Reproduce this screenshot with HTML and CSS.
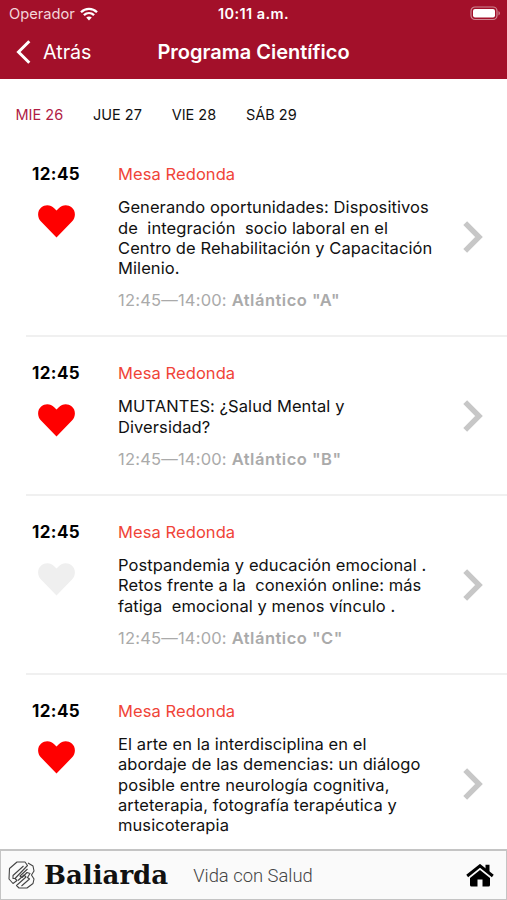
FILE: index.html
```html
<!DOCTYPE html>
<html lang="es">
<head>
  <meta charset="UTF-8" />
  <meta name="viewport" content="width=device-width, initial-scale=1" />
  <title>Programa Científico</title>
  <link rel="stylesheet" href="styles.css">
</head>
<body>

  <!-- Iconos reutilizables -->
  <svg class="iconos" width="0" height="0">
    <symbol id="corazon" viewBox="0 0 37 33">
      <path d="M18.5 32.4 L3 16.6 C-1 12.4 -.8 6 3.2 2.6 C7.2 -.9 12.8 -.2 16.2 3.2 L18.5 5.6 L20.8 3.2 C24.2 -.2 29.8 -.9 33.8 2.6 C37.8 6 38 12.4 34 16.6 Z" fill="currentColor"/>
    </symbol>
    <symbol id="flecha" viewBox="0 0 20 32">
      <path d="M2.2 2.2 L16 16 L2.2 29.8" fill="none" stroke="currentColor" stroke-width="5.4"/>
    </symbol>
  </svg>

  <header>
    <div class="estado">
      <span class="operador">Operador
        <svg width="18" height="14" viewBox="0 0 18 14" fill="none" stroke="#fff" stroke-width="2.3">
          <path d="M1 5.2 C5.5 .7 12.5 .7 17 5.2"/>
          <path d="M3.9 8.2 C6.9 5.3 11.1 5.3 14.1 8.2"/>
          <path d="M6.2 10.5 C7.8 9 10.2 9 11.8 10.5 L9 13.4 Z" fill="#fff" stroke="none"/>
        </svg>
      </span>
      <span class="reloj">10:11 a.m.</span>
      <svg class="bateria" width="31" height="15" viewBox="0 0 31 15">
        <rect x="1" y="1" width="26" height="12.5" rx="4" fill="none" stroke="#cf8793" stroke-width="1.2"/>
        <rect x="3" y="3" width="22" height="8.5" rx="2" fill="#fff"/>
        <path d="M28.5 5 C30.4 5.8 30.4 8.7 28.5 9.5 Z" fill="#cf8793"/>
      </svg>
    </div>
    <div class="barra">
      <a class="atras">
        <svg width="15" height="24" viewBox="0 0 15 24" fill="none" stroke="#fff" stroke-width="3">
          <path d="M13.3 1.3 L2.5 12 L13.3 22.7"/>
        </svg>
        <span>Atrás</span>
      </a>
      <h1>Programa Científico</h1>
    </div>
  </header>

  <nav>
    <a class="activo">MIE 26</a>
    <a>JUE 27</a>
    <a>VIE 28</a>
    <a>SÁB 29</a>
  </nav>

  <main>
    <article>
      <div class="hora">
        <strong>12:45</strong>
        <svg class="favorito"><use href="#corazon"/></svg>
      </div>
      <div class="detalle">
        <h2>Mesa Redonda</h2>
        <p class="titulo">Generando oportunidades: Dispositivos<br>de &nbsp;integración &nbsp;socio laboral en el<br>Centro de Rehabilitación y Capacitación<br>Milenio.</p>
        <p class="lugar">12:45—14:00: <b>Atlántico "A"</b></p>
      </div>
      <svg class="ver"><use href="#flecha"/></svg>
    </article>

    <article>
      <div class="hora">
        <strong>12:45</strong>
        <svg class="favorito"><use href="#corazon"/></svg>
      </div>
      <div class="detalle">
        <h2>Mesa Redonda</h2>
        <p class="titulo">MUTANTES: ¿Salud Mental y<br>Diversidad?</p>
        <p class="lugar">12:45—14:00: <b>Atlántico "B"</b></p>
      </div>
      <svg class="ver"><use href="#flecha"/></svg>
    </article>

    <article>
      <div class="hora">
        <strong>12:45</strong>
        <svg class="favorito inactivo"><use href="#corazon"/></svg>
      </div>
      <div class="detalle">
        <h2>Mesa Redonda</h2>
        <p class="titulo">Postpandemia y educación emocional .<br>Retos frente a la &nbsp;conexión online: más<br>fatiga &nbsp;emocional y menos vínculo .</p>
        <p class="lugar">12:45—14:00: <b>Atlántico "C"</b></p>
      </div>
      <svg class="ver"><use href="#flecha"/></svg>
    </article>

    <article>
      <div class="hora">
        <strong>12:45</strong>
        <svg class="favorito"><use href="#corazon"/></svg>
      </div>
      <div class="detalle sin-lugar">
        <h2>Mesa Redonda</h2>
        <p class="titulo">El arte en la interdisciplina en el<br>abordaje de las demencias: un diálogo<br>posible entre neurología cognitiva,<br>arteterapia, fotografía terapéutica y<br>musicoterapia</p>
      </div>
      <svg class="ver"><use href="#flecha"/></svg>
    </article>
  </main>

  <footer>
    <svg class="logo" width="27" height="28" viewBox="0 0 27 28" fill="none" stroke="#444" stroke-width="1.1" stroke-linejoin="round">
      <path d="M17 1 L9 1 L1.5 7.5 L1 18 L5 22.5 L9 19.5 L7 17.5 L19.5 4.5 L17 1 Z"/>
      <path d="M15.5 5 L5 14.5 L5 17.5 L7 17.5"/>
      <path d="M20 2 L25 5 L26 10 L23.5 14 L26 18 L25 22.5 L19 27 L11 27 L8.5 24.5 L18 16 L16 14 L10 19.5"/>
      <path d="M19.5 8 L12 15 L14 16.5 L19 11.5 L22 12.5 L19.5 16.5 L21.5 18 L13.5 25"/>
    </svg>
    <span class="marca">Baliarda</span>
    <span class="lema">Vida con Salud</span>
    <svg class="inicio" width="28" height="23" viewBox="0 0 28 23">
      <path d="M1.2 12 L14 1.8 L26.8 12" fill="none" stroke="#000" stroke-width="3"/>
      <path d="M19.5 .8 H23.5 V9 L19.5 6 Z"/>
      <path d="M14 6 L24 14 V21 Q24 22.5 22.5 22.5 H16.5 V15.5 H11.5 V22.5 H5.5 Q4 22.5 4 21 V14 Z"/>
    </svg>
  </footer>

</body>
</html>
```
FILE: styles.css
```css
* {
  box-sizing: border-box;
}

body {
  display: flex;
  flex-direction: column;
  height: 900px;
  margin: 0;
  overflow: hidden;
  background-color: #fff;
  color: #111;
  font-family: Inter, "Liberation Sans", sans-serif;
}

h1, h2, p {
  margin: 0;
}

.iconos {
  position: absolute;
}

header {
  flex: none;
  height: 79px;
  background-color: #a3102a;
  color: #fff;
}

.estado {
  display: grid;
  grid-template-columns: 1fr auto 1fr;
  align-items: center;
  height: 27px;
  padding: 0 6px 0 9px;
  font-size: 14.7px;
}

.operador {
  display: flex;
  align-items: center;
  gap: 5px;
  color: #f3d5da;
}

.reloj {
  margin-left: -3px;
  font-weight: 600;
  font-size: 14.5px;
  letter-spacing: 0.4px;
}

.bateria {
  justify-self: end;
}

.barra {
  display: grid;
  grid-template-columns: 1fr auto 1fr;
  align-items: center;
  height: 50px;
  padding: 0 16px;
}

.atras {
  display: flex;
  align-items: center;
  gap: 12px;
  font-size: 19.7px;
}

h1 {
  font-size: 20px;
  font-weight: 600;
}

nav {
  flex: none;
  display: flex;
  gap: 29.8px;
  height: 59.3px;
  padding: 27px 15.5px 0;
  font-size: 14.5px;
  line-height: 18px;
}

nav .activo {
  color: #b01d45;
}

main {
  flex: 1;
  min-height: 0;
  overflow: hidden;
}

article {
  display: flex;
  margin-left: 26px;
  padding: 26px 24px 25px 6px;
  border-bottom: 2px solid #f0f0f0;
}

.hora {
  width: 86px;
  font-size: 17px;
  line-height: 20px;
  letter-spacing: 0.4px;
  color: #000;
}

.hora strong {
  display: block;
  font-weight: 700;
}

.favorito {
  display: block;
  width: 37px;
  height: 33px;
  margin: 20.5px 0 0 6px;
  color: #f00;
}

.favorito.inactivo {
  color: #efefef;
}

.detalle {
  flex: 1;
  font-size: 16.5px;
  line-height: 20.3px;
  letter-spacing: 0.08px;
  white-space: nowrap;
}

.sin-lugar {
  padding-bottom: 32px;
}

h2 {
  margin-bottom: 13px;
  font-size: 16.5px;
  font-weight: 400;
  line-height: 20px;
  color: #f04438;
}

.lugar {
  margin-top: 12px;
  line-height: 20px;
  letter-spacing: 0.2px;
  color: #aaa;
}

.lugar b {
  font-weight: 600;
  letter-spacing: 0.5px;
}

.ver {
  flex: none;
  align-self: center;
  width: 20px;
  height: 32px;
  color: #c7c7c7;
}

footer {
  flex: none;
  display: flex;
  align-items: center;
  height: 51px;
  padding: 0 12px 0 7px;
  border: 1px solid #c4c4c4;
  border-top-width: 2px;
  background-color: #fafafa;
}

.marca {
  margin-left: 9px;
  font-family: "DejaVu Serif", serif;
  font-size: 26px;
  font-weight: 700;
  color: #111;
}

.lema {
  margin-left: 25px;
  font-family: Roboto, sans-serif;
  font-size: 18.4px;
  font-weight: 300;
  color: #444;
}

.inicio {
  margin-left: auto;
}
```
